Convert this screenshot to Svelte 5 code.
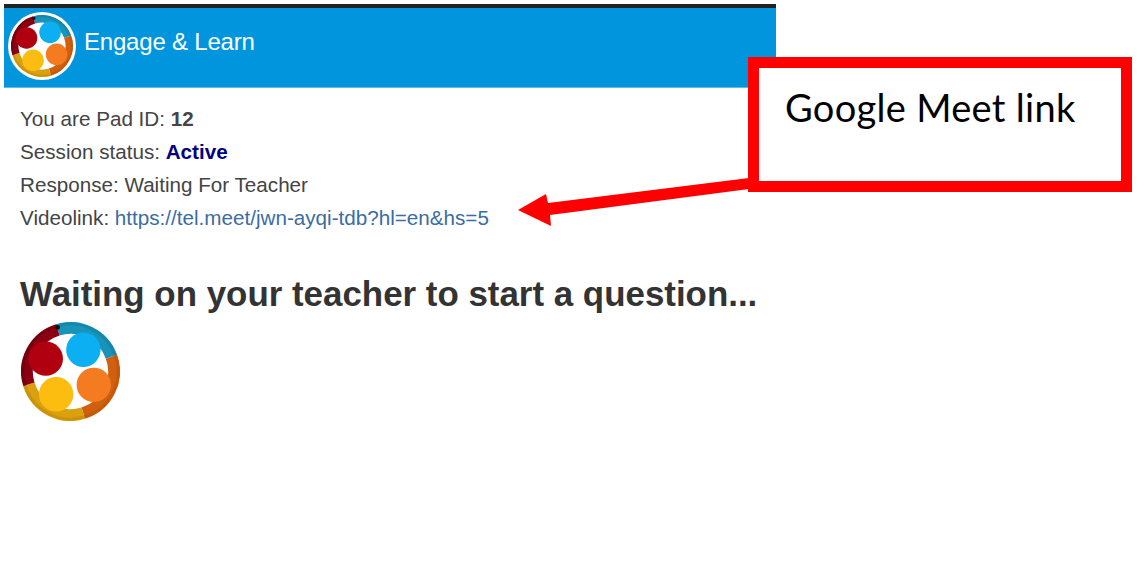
<script>
  const arcs = [
    { from: -107, to: -20, ring: '#1a93b8', dark: '#1387ae' },
    { from: -20, to: 73, ring: '#d0600f', dark: '#c5590b' },
    { from: 73, to: 163, ring: '#d9a00f', dark: '#cc930a' },
    { from: 163, to: 253, ring: '#8a0012', dark: '#75000f' }
  ];
  const heads = [
    { x: 13, y: -22, fill: '#0cb0f2', arm: '#1a93b8' },
    { x: -25, y: -13, fill: '#b0000f', arm: '#8a0012' },
    { x: 23.5, y: 13.5, fill: '#f47b20', arm: '#d0600f' },
    { x: -14.5, y: 23, fill: '#fcbc10', arm: '#d9a00f' }
  ];
  const pt = (a, r = 44) => {
    const t = (a * Math.PI) / 180;
    return `${(50 + r * Math.cos(t)).toFixed(2)} ${(50 + r * Math.sin(t)).toFixed(2)}`;
  };
  const arcPath = (from, to, r = 44) => `M${pt(from, r)} A${r} ${r} 0 0 1 ${pt(to, r)}`;
  const armPath = (h) => {
    const a = (Math.atan2(h.y, h.x) * 180) / Math.PI;
    return `M${50 + h.x} ${50 + h.y} L${pt(a - 14, 42)} L${pt(a + 22, 42)} Z`;
  };
</script>

{#snippet logo()}
  <svg class="logo-svg" viewBox="0 0 100 100" aria-hidden="true">
    <circle cx="50" cy="50" r="50" fill="#fff" />
    {#each arcs as a}
      <path d={arcPath(a.from, a.to)} fill="none" stroke={a.ring} stroke-width="12" />
      <path d={arcPath(a.from, a.to, 48)} fill="none" stroke={a.dark} stroke-width="3" />
    {/each}
    {#each heads as h}
      <path d={armPath(h)} fill={h.arm} />
      <circle cx={50 + h.x} cy={50 + h.y} r="17.4" fill={h.fill} />
    {/each}
    <circle cx="37" cy="5.5" r="2.4" fill="#1a0a10" />
  </svg>
{/snippet}

<div class="page">
  <header class="bar">
    <div class="badge">{@render logo()}</div>
    <span class="title">Engage &amp; Learn</span>
  </header>

  <main class="content">
    <p>You are Pad ID: <b>12</b></p>
    <p>Session status: <b class="active">Active</b></p>
    <p>Response: Waiting For Teacher</p>
    <p>Videolink: <a href="#top">https://tel.meet/jwn-ayqi-tdb?hl=en&amp;hs=5</a></p>
    <h1>Waiting on your teacher to start a question...</h1>
    <div class="big-logo">{@render logo()}</div>
  </main>

  <div class="callout">Google Meet link</div>
  <svg class="arrow" width="232" height="48" viewBox="0 0 232 48" aria-hidden="true">
    <polygon points="232,-2 232,9 33,35 34,46 1,30 29,14 31,23" fill="#f00" />
  </svg>
</div>

<style>
  :global(body) {
    margin: 0;
    background: #fff;
  }
  .page {
    position: relative;
    width: 1148px;
    height: 561px;
    overflow: hidden;
    box-sizing: border-box;
    padding: 4px 0 0 4px;
    font-family: "Liberation Sans", Arial, sans-serif;
    color: #444;
  }
  .bar {
    box-sizing: border-box;
    width: 772px;
    height: 84px;
    display: flex;
    align-items: flex-start;
    gap: 8px;
    padding: 4px 0 0 4px;
    border-top: 4px solid #222;
    border-bottom: 1px solid #5fb9ec;
    background: #0095dc;
  }
  .badge {
    width: 68px;
    height: 68px;
    box-sizing: border-box;
    padding: 3px;
    border-radius: 50%;
    background: #fff;
    flex: none;
  }
  .logo-svg {
    display: block;
    width: 100%;
    height: 100%;
  }
  .title {
    margin-top: 15px;
    color: #fff;
    font-size: 24px;
    line-height: 30px;
    letter-spacing: -0.2px;
  }
  .content {
    padding: 14px 0 0 16px;
  }
  p {
    margin: 0;
    font-size: 20.65px;
    line-height: 33px;
  }
  .active {
    color: #000080;
  }
  a {
    color: #3b6ca3;
    text-decoration: none;
  }
  h1 {
    margin: 38px 0 0;
    font-size: 34.9px;
    line-height: 44px;
    color: #333;
    font-weight: 700;
  }
  .big-logo {
    width: 99px;
    height: 99px;
    margin: 6px 0 0 1px;
  }
  .callout {
    position: absolute;
    left: 748px;
    top: 57px;
    box-sizing: border-box;
    width: 384px;
    height: 135px;
    border: 11px solid #f00;
    padding: 16px 0 0 26px;
    background: #fff;
    font-family: Lato, "Open Sans", sans-serif;
    font-size: 38px;
    line-height: 46px;
    letter-spacing: 0.3px;
    color: #000;
  }
  .arrow {
    position: absolute;
    left: 517px;
    top: 180px;
    overflow: visible;
  }
</style>
